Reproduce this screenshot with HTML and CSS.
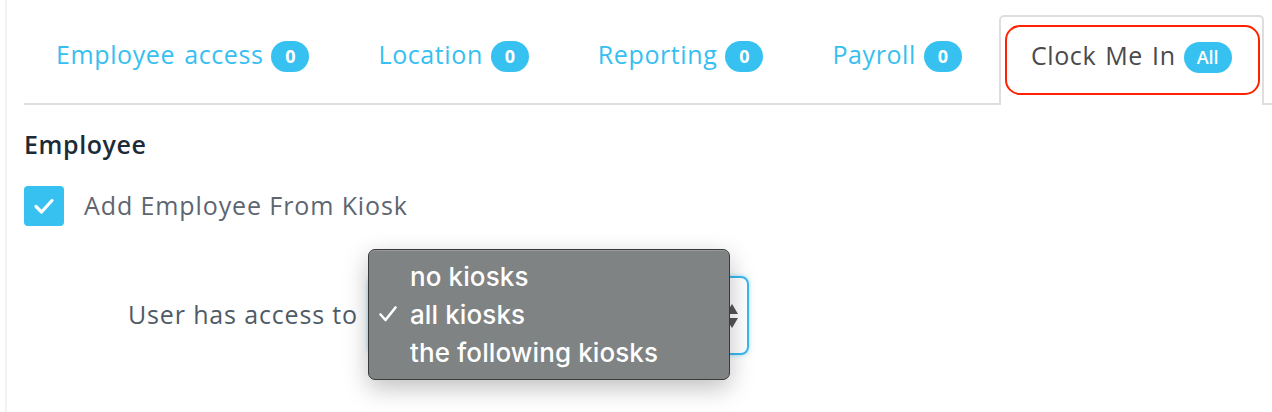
FILE: index.html
```html
<!DOCTYPE html>
<html>
<head>
<meta charset="utf-8">
<link rel="stylesheet" href="styles.css">
</head>
<body>
<div class="page">
  <ul class="tabs">
    <li class="tab"><span class="tab-label">Employee access</span><span class="badge">0</span></li>
    <li class="tab"><span class="tab-label">Location</span><span class="badge">0</span></li>
    <li class="tab"><span class="tab-label">Reporting</span><span class="badge">0</span></li>
    <li class="tab"><span class="tab-label">Payroll</span><span class="badge">0</span></li>
    <li class="tab active"><span class="tab-label">Clock Me In</span><span class="badge badge-all">All</span><span class="highlight"></span></li>
    <li class="tab-fill"></li>
  </ul>
  <section class="panel">
    <h2 class="heading">Employee</h2>
    <label class="check-row">
      <span class="checkbox">
        <svg width="24" height="24" viewBox="0 0 24 24"><path d="M4 12.5 L9.5 18 L20 6.5" fill="none" stroke="#fff" stroke-width="3.2" stroke-linecap="round" stroke-linejoin="round"/></svg>
      </span>
      <span class="check-label">Add Employee From Kiosk</span>
    </label>
    <div class="access-row">
      <span class="access-label">User has access to</span>
      <div class="select-wrap">
        <div class="select">
          <span class="arrows">
            <svg width="14" height="26" viewBox="0 0 14 26"><path d="M7 1 L13 11 L1 11 Z" fill="#555"/><path d="M1 15 L13 15 L7 25 Z" fill="#555"/></svg>
          </span>
        </div>
        <ul class="popup">
          <li class="opt"><span class="tick"></span>no kiosks</li>
          <li class="opt"><span class="tick"><svg width="20" height="18" viewBox="0 0 20 18"><path d="M2.5 9.5 L7.5 15 L17.5 2.5" fill="none" stroke="#fff" stroke-width="2.6" stroke-linecap="round" stroke-linejoin="round"/></svg></span>all kiosks</li>
          <li class="opt"><span class="tick"></span>the following kiosks</li>
        </ul>
      </div>
    </div>
  </section>
</div>
</body>
</html>
```

FILE: styles.css
```css
html, body {
  margin: 0;
  padding: 0;
  background: #ffffff;
}
body {
  font-family: "Open Sans", "Liberation Sans", sans-serif;
}
.page {
  margin-left: 5px;
  border-left: 2px solid #f2f2f2;
  padding-left: 17px;
  min-height: 412px;
  box-sizing: border-box;
}
.tabs {
  list-style: none;
  margin: 0;
  padding: 15px 0 0 0;
  display: flex;
  gap: 5px;
  border-bottom: 2px solid #dedede;
}
.tab {
  position: relative;
  flex: none;
  white-space: nowrap;
  height: 88px;
  padding: 0 30px 12px 30px;
  display: flex;
  align-items: center;
  gap: 8px;
  box-sizing: border-box;
  border: 2px solid transparent;
  border-bottom: none;
  margin-bottom: -2px;
  color: #36bff0;
  font-size: 25px;
  letter-spacing: 0.6px;
  word-spacing: 2px;
}
.tab.active {
  border-color: #dedede;
  border-radius: 5px 5px 0 0;
  background: #fff;
  height: 90px;
  color: #4a4a4a;
}
.tab-fill { flex: 1 1 0; min-width: 0; }
.badge {
  display: inline-flex;
  align-items: center;
  justify-content: center;
  min-width: 38px;
  height: 31px;
  border-radius: 16px;
  background: #36c1f1;
  color: #fff;
  font-size: 18px;
  font-weight: 700;
  letter-spacing: 0;
  word-spacing: 0;
  box-sizing: border-box;
  margin-top: 4px;
}
.badge-all {
  min-width: 48px;
  font-weight: 600;
  font-size: 18px;
}
.highlight {
  position: absolute;
  left: 4px;
  right: 2px;
  top: 8px;
  bottom: 10px;
  border: 2.5px solid #ff2200;
  border-radius: 15px;
  pointer-events: none;
}
.panel {
  padding-top: 22px;
}
.heading {
  margin: 0;
  font-size: 25px;
  font-weight: 600;
  color: #1d2b38;
  line-height: 34px;
  letter-spacing: 0.6px;
}
.check-row {
  display: flex;
  align-items: center;
  gap: 20px;
  margin-top: 25px;
}
.checkbox {
  width: 40px;
  height: 40px;
  border-radius: 4px;
  background: #36c1f1;
  display: flex;
  align-items: center;
  justify-content: center;
}
.check-label {
  font-size: 25px;
  color: #5d6670;
  letter-spacing: 0.9px;
  margin-top: -3px;
}
.access-row {
  display: flex;
  align-items: center;
  margin-top: 50px;
  padding-left: 104px;
  gap: 10px;
}
.access-label {
  font-size: 25px;
  color: #4f5b66;
  letter-spacing: 0.85px;
  margin-top: -4px;
}
.select-wrap {
  position: relative;
}
.select {
  width: 381px;
  height: 79px;
  box-sizing: border-box;
  border: 2px solid #3bb8ee;
  border-radius: 8px;
  box-shadow: 0 0 4px rgba(59, 184, 238, 0.5);
  display: flex;
  align-items: center;
  justify-content: flex-end;
  padding-right: 8px;
}
.arrows { display: flex; }
.popup {
  position: absolute;
  left: 0;
  top: -27px;
  width: 362px;
  height: 131px;
  box-sizing: border-box;
  margin: 0;
  padding: 7px 0 0 0;
  list-style: none;
  background: #808383;
  border: 1px solid #3a3a3a;
  border-radius: 7px;
  box-shadow: 0 8px 24px rgba(0, 0, 0, 0.25), inset 0 1px 0 rgba(255,255,255,0.2);
  color: #fff;
  font-family: "Inter", "Liberation Sans", sans-serif;
  font-weight: 500;
  font-size: 26px;
}
.opt {
  display: flex;
  align-items: center;
  height: 38px;
  letter-spacing: 0.1px;
}
.tick {
  width: 41px;
  padding-left: 9px;
  box-sizing: border-box;
  display: flex;
  align-items: center;
}
```
